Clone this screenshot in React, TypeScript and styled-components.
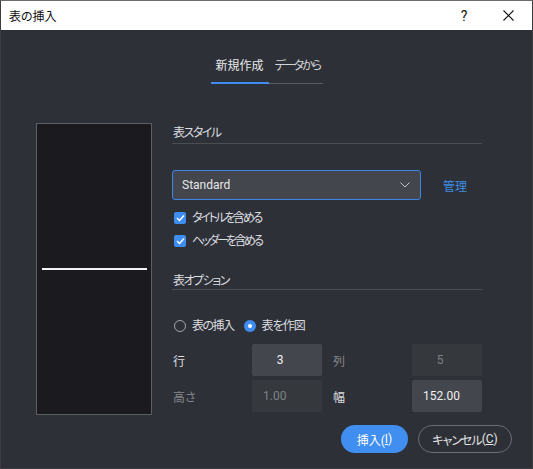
import React from 'react';
import styled, { createGlobalStyle, css } from 'styled-components';

const GlobalStyle = createGlobalStyle`
  html, body {
    margin: 0;
    padding: 0;
    background: #2d3036;
  }
  * {
    box-sizing: border-box;
  }
`;

const font = css`
  font-family: 'Roboto', 'Noto Sans CJK JP', sans-serif;
  font-feature-settings: 'palt';
`;

const Window = styled.div`
  ${font}
  width: 533px;
  height: 469px;
  border: 1px solid #3c3d40;
  border-top-color: #6b6b6b;
  background: #2d3036;
  display: flex;
  flex-direction: column;
  color: #dcdde0;
  font-size: 12px;
`;

const TitleBar = styled.header`
  height: 29px;
  flex: none;
  background: #fff;
  color: #111;
  display: flex;
  align-items: center;
  padding-left: 8px;
  font-size: 12px;
`;

const TitleText = styled.span`
  flex: 1;
`;

const TitleButton = styled.span<{ $w: number }>`
  width: ${p => p.$w}px;
  display: flex;
  justify-content: center;
  align-items: center;
  color: #111;
  font-size: 14px;
`;

const Tabs = styled.nav`
  display: flex;
  justify-content: center;
  margin-top: 28px;
`;

const Tab = styled.span<{ $active?: boolean; $w: number }>`
  width: ${p => p.$w}px;
  line-height: 16px;
  font-size: 12px;
  white-space: nowrap;
  color: ${p => (p.$active ? '#e8e9eb' : '#d4d5d8')};
  ${p =>
    p.$active
      ? css`
          padding: 0 0 8px 5px;
          border-bottom: 2px solid #3d8ef0;
        `
      : css`
          padding: 0 0 9px 6px;
          border-bottom: 1px solid #5a5d62;
          letter-spacing: -2px;
        `}
`;

const Main = styled.section`
  display: flex;
  gap: 20px;
  margin-top: 39px;
  padding-left: 35px;
`;

const Preview = styled.div`
  width: 116px;
  height: 292px;
  background: #1b1b1f;
  border: 1px solid #5b5f64;
  display: flex;
  align-items: center;
  padding: 0 4px 0 5px;
`;

const PreviewLine = styled.div`
  height: 2px;
  flex: 1;
  background: #f4f4f4;
`;

const Panel = styled.div`
  width: 310px;
  display: flex;
  flex-direction: column;
`;

const SectionHeading = styled.div<{ $mt?: number; $pb: number }>`
  line-height: 16px;
  padding: 2px 0 ${p => p.$pb}px 1px;
  margin-top: ${p => p.$mt ?? 0}px;
  border-bottom: 1px solid #4a4d52;
  color: #dcdde0;
  letter-spacing: -1.5px;
`;

const StyleRow = styled.div`
  display: flex;
  align-items: center;
  margin-top: 26px;
`;

const Select = styled.div`
  width: 249px;
  height: 30px;
  background: #43464c;
  border: 1px solid #3b86e6;
  border-radius: 3px;
  display: flex;
  align-items: center;
  justify-content: space-between;
  padding: 0 10px 0 9px;
  color: #e6e7ea;
  font-size: 12px;
`;

const LinkText = styled.span`
  margin-left: 22px;
  color: #3d8ee8;
  font-size: 12px;
`;

const CheckRow = styled.label<{ $mt: number }>`
  display: flex;
  align-items: center;
  gap: 6px;
  line-height: 16px;
  margin-top: ${p => p.$mt}px;
  padding-left: 2px;
  color: #dcdde0;
`;

const Kana = styled.span<{ $ls: number }>`
  letter-spacing: ${p => p.$ls}px;
`;

const CheckBox = styled.span`
  width: 12px;
  height: 12px;
  border-radius: 2px;
  background: #3d8ef0;
  display: flex;
  align-items: center;
  justify-content: center;
`;

const RadioRow = styled.div`
  display: flex;
  align-items: center;
  margin-top: 28px;
  line-height: 16px;
  padding-left: 2px;
`;

const RadioItem = styled.label`
  display: flex;
  align-items: center;
  gap: 6px;
  margin-right: 10px;
`;

const Radio = styled.span<{ $checked?: boolean }>`
  width: 12px;
  height: 12px;
  border-radius: 50%;
  display: flex;
  align-items: center;
  justify-content: center;
  ${p =>
    p.$checked
      ? css`
          background: #3d8ef0;
          &::after {
            content: '';
            width: 4px;
            height: 4px;
            border-radius: 50%;
            background: #fff;
          }
        `
      : css`
          border: 1px solid #a4a6aa;
        `}
`;

const Grid = styled.div`
  display: grid;
  grid-template-columns: 80px 70px 90px 70px;
  grid-auto-rows: 32px;
  row-gap: 4px;
  margin-top: 10px;
`;

const FieldLabel = styled.span<{ $disabled?: boolean; $indent?: boolean }>`
  display: flex;
  align-items: center;
  padding-left: ${p => (p.$indent ? 11 : 1)}px;
  color: ${p => (p.$disabled ? '#85878c' : '#dcdde0')};
`;

const Field = styled.div<{ $disabled?: boolean; $center?: boolean }>`
  border-radius: 2px;
  display: flex;
  align-items: center;
  background: ${p => (p.$disabled ? '#35383d' : '#43464c')};
  color: ${p => (p.$disabled ? '#7e8185' : '#f0f0f2')};
  justify-content: ${p => (p.$center ? 'center' : 'flex-start')};
  padding: ${p => (p.$center ? '0 14px 0 0' : '0 0 0 11px')};
  font-size: 12px;
`;

const Footer = styled.footer`
  display: flex;
  justify-content: flex-end;
  gap: 10px;
  margin-top: 10px;
  padding-right: 20px;
`;

const Button = styled.button<{ $primary?: boolean; $w: number }>`
  ${font}
  width: ${p => p.$w}px;
  height: 28px;
  border-radius: 14px;
  font-size: 12px;
  display: flex;
  align-items: center;
  justify-content: center;
  padding: 0;
  ${p =>
    p.$primary
      ? css`
          background: #3f8ef0;
          border: none;
          color: #fff;
        `
      : css`
          background: transparent;
          border: 1px solid #6b6e73;
          color: #e4e5e8;
        `}
`;

const Mnemonic = styled.span`
  text-decoration: underline;
`;

const Check = () => (
  <svg width="9" height="8" viewBox="0 0 9 8">
    <polyline points="1,4 3.5,6.5 8,1.5" fill="none" stroke="#fff" strokeWidth="1.5" />
  </svg>
);

const Chevron = () => (
  <svg width="10" height="6" viewBox="0 0 10 6">
    <polyline points="0.5,0.5 5,5 9.5,0.5" fill="none" stroke="#c4c6ca" strokeWidth="1" />
  </svg>
);

const CloseIcon = () => (
  <svg width="11" height="11" viewBox="0 0 11 11">
    <path d="M0.5 0.5 L10.5 10.5 M10.5 0.5 L0.5 10.5" stroke="#111" strokeWidth="1.1" />
  </svg>
);

export default function App() {
  return (
    <>
      <GlobalStyle />
      <Window>
        <TitleBar>
          <TitleText>表の挿入</TitleText>
          <TitleButton $w={22}>?</TitleButton>
          <TitleButton $w={20} style={{ marginLeft: 23, marginRight: 14 }}>
            <CloseIcon />
          </TitleButton>
        </TitleBar>

        <Tabs>
          <Tab $active $w={58}>新規作成</Tab>
          <Tab $w={54}>データから</Tab>
        </Tabs>

        <Main>
          <Preview>
            <PreviewLine />
          </Preview>
          <Panel>
            <SectionHeading $pb={2}>表スタイル</SectionHeading>
            <StyleRow>
              <Select>
                <span>Standard</span>
                <Chevron />
              </Select>
              <LinkText>管理</LinkText>
            </StyleRow>
            <CheckRow $mt={10}>
              <CheckBox>
                <Check />
              </CheckBox>
              <Kana $ls={-2.3}>タイトルを含める</Kana>
            </CheckRow>
            <CheckRow $mt={7}>
              <CheckBox>
                <Check />
              </CheckBox>
              <Kana $ls={-2.6}>ヘッダーを含める</Kana>
            </CheckRow>

            <SectionHeading $mt={22} $pb={0}>表オプション</SectionHeading>
            <RadioRow>
              <RadioItem>
                <Radio />
                <Kana $ls={-1.5}>表の挿入</Kana>
              </RadioItem>
              <RadioItem>
                <Radio $checked />
                <Kana $ls={-1}>表を作図</Kana>
              </RadioItem>
            </RadioRow>
            <Grid>
              <FieldLabel>行</FieldLabel>
              <Field $center>3</Field>
              <FieldLabel $disabled $indent>列</FieldLabel>
              <Field $disabled $center>5</Field>
              <FieldLabel $disabled>高さ</FieldLabel>
              <Field $disabled>1.00</Field>
              <FieldLabel $indent>幅</FieldLabel>
              <Field>152.00</Field>
            </Grid>
          </Panel>
        </Main>

        <Footer>
          <Button $primary $w={67}>
            挿入(<Mnemonic>I</Mnemonic>)
          </Button>
          <Button $w={94}>
            <Kana $ls={-1}>キャンセル</Kana>(<Mnemonic>C</Mnemonic>)
          </Button>
        </Footer>
      </Window>
    </>
  );
}
